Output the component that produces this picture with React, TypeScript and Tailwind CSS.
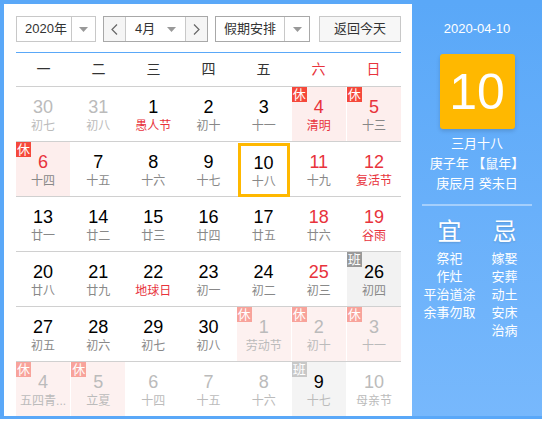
import React from "react";

type Day = {
  d: number;
  l: string;
  faded?: boolean;
  red?: boolean;
  lred?: boolean;
  tag?: "休" | "班";
  today?: boolean;
};

const weeks: Day[][] = [
  [
    { d: 30, l: "初七", faded: true },
    { d: 31, l: "初八", faded: true },
    { d: 1, l: "愚人节", lred: true },
    { d: 2, l: "初十" },
    { d: 3, l: "十一" },
    { d: 4, l: "清明", red: true, lred: true, tag: "休" },
    { d: 5, l: "十三", red: true, tag: "休" },
  ],
  [
    { d: 6, l: "十四", red: true, tag: "休" },
    { d: 7, l: "十五" },
    { d: 8, l: "十六" },
    { d: 9, l: "十七" },
    { d: 10, l: "十八", today: true },
    { d: 11, l: "十九", red: true },
    { d: 12, l: "复活节", red: true, lred: true },
  ],
  [
    { d: 13, l: "廿一" },
    { d: 14, l: "廿二" },
    { d: 15, l: "廿三" },
    { d: 16, l: "廿四" },
    { d: 17, l: "廿五" },
    { d: 18, l: "廿六", red: true },
    { d: 19, l: "谷雨", red: true, lred: true },
  ],
  [
    { d: 20, l: "廿八" },
    { d: 21, l: "廿九" },
    { d: 22, l: "地球日", lred: true },
    { d: 23, l: "初一" },
    { d: 24, l: "初二" },
    { d: 25, l: "初三", red: true },
    { d: 26, l: "初四", tag: "班" },
  ],
  [
    { d: 27, l: "初五" },
    { d: 28, l: "初六" },
    { d: 29, l: "初七" },
    { d: 30, l: "初八" },
    { d: 1, l: "劳动节", faded: true, tag: "休" },
    { d: 2, l: "初十", faded: true, tag: "休" },
    { d: 3, l: "十一", faded: true, tag: "休" },
  ],
  [
    { d: 4, l: "五四青...", faded: true, tag: "休" },
    { d: 5, l: "立夏", faded: true, tag: "休" },
    { d: 6, l: "十四", faded: true },
    { d: 7, l: "十五", faded: true },
    { d: 8, l: "十六", faded: true },
    { d: 9, l: "十七", faded: true, tag: "班" },
    { d: 10, l: "母亲节", faded: true },
  ],
];

const font = { fontFamily: '"Liberation Sans", "Noto Sans CJK SC", sans-serif' };

function Caret() {
  return (
    <svg width="9" height="5" viewBox="0 0 9 5">
      <path d="M0 0h9L4.5 5z" fill="#999" />
    </svg>
  );
}

function Chevron({ dir }: { dir: "l" | "r" }) {
  return (
    <svg width="7" height="11" viewBox="0 0 7 11">
      <polyline
        points={dir === "l" ? "6,0.5 1,5.5 6,10.5" : "1,0.5 6,5.5 1,10.5"}
        fill="none"
        stroke="#666"
        strokeWidth="1.2"
      />
    </svg>
  );
}

function Cell({ day }: { day: Day }) {
  let bg = "bg-white";
  if (day.tag === "休") bg = day.faded ? "bg-[#fdf1f0]" : "bg-[#fdeeed]";
  if (day.tag === "班") bg = day.faded ? "bg-[#f4f4f4]" : "bg-[#f2f2f2]";

  let numColor = "text-black";
  if (day.red) numColor = "text-[#e8333c]";
  if (day.faded && day.tag !== "班") numColor = "text-[#bbbbbb]";

  let lunarColor = "text-[#888888]";
  if (day.lred) lunarColor = "text-[#e8333c]";
  if (day.faded) lunarColor = "text-[#bbbbbb]";

  let badge = "";
  if (day.tag === "休") badge = day.faded ? "bg-[#f8a39b]" : "bg-[#f5483b]";
  if (day.tag === "班") badge = day.faded ? "bg-[#c8c8c8]" : "bg-[#999999]";

  return (
    <div className={`relative h-[54px] ${bg}`}>
      {day.tag && (
        <span
          className={`absolute left-0 top-0 flex h-[15px] w-[15px] items-center justify-center text-[13px] leading-none text-white ${badge}`}
        >
          {day.tag}
        </span>
      )}
      <div
        className={`flex h-full flex-col items-center ${
          day.today ? "mx-px mt-px h-[53px] border-[3px] border-[#ffb800] pt-[7px]" : "pt-[10px]"
        }`}
      >
        <span className={`text-[18px] leading-[20px] ${numColor}`}>{day.d}</span>
        <span className={`text-[12px] leading-[18px] ${lunarColor}`}>{day.l}</span>
      </div>
    </div>
  );
}

export default function App() {
  return (
    <div className="h-[421px] w-[545px] bg-white" style={font}>
      <div className="flex h-[419px] w-[542px] border-b-[3px] border-l-4 border-t-4 border-[#5aa8f8]">
        {/* calendar */}
        <div className="w-[408px] pl-3 pr-[11px] pt-3">
          <div className="flex h-[26px] text-[13px] text-[#333]">
            <div className="flex w-[80px] border border-[#c8c8c8] bg-white">
              <span className="flex flex-1 items-center justify-center pl-1">2020年</span>
              <span className="flex w-[24px] items-center justify-center border-l border-[#c8c8c8]">
                <Caret />
              </span>
            </div>
            <div className="ml-[7px] flex w-[105px] border border-[#a8a8a8] bg-white">
              <span className="flex w-[22px] items-center justify-center border-r border-[#c8c8c8] bg-[#f5f5f5]">
                <Chevron dir="l" />
              </span>
              <span className="flex flex-1 items-center pl-[9px]">
                4月
                <span className="ml-auto mr-[9px] flex">
                  <Caret />
                </span>
              </span>
              <span className="flex w-[22px] items-center justify-center border-l border-[#c8c8c8] bg-[#f5f5f5]">
                <Chevron dir="r" />
              </span>
            </div>
            <div className="ml-[7px] flex w-[95px] border border-[#a8a8a8] bg-white">
              <span className="flex flex-1 items-center justify-center">假期安排</span>
              <span className="flex w-[25px] items-center justify-center border-l border-[#c8c8c8]">
                <Caret />
              </span>
            </div>
            <div className="ml-[9px] flex w-[82px] items-center justify-center border border-[#c8c8c8] bg-[#f7f7f7]">
              返回今天
            </div>
          </div>

          <div className="mt-[10px] border-t border-[#5aa8f8]">
            <div className="grid h-[34px] grid-cols-7 items-center border-b border-[#d0d0d0] text-center text-[14px]">
              <span className="text-[#333]">一</span>
              <span className="text-[#333]">二</span>
              <span className="text-[#333]">三</span>
              <span className="text-[#333]">四</span>
              <span className="text-[#333]">五</span>
              <span className="text-[#e8333c]">六</span>
              <span className="text-[#e8333c]">日</span>
            </div>
            {weeks.map((w, i) => (
              <div
                key={i}
                className={`grid grid-cols-7 gap-x-px ${i < 5 ? "border-b border-[#d0d0d0]" : ""}`}
              >
                {w.map((d, j) => (
                  <Cell key={j} day={d} />
                ))}
              </div>
            ))}
          </div>
        </div>

        {/* side panel */}
        <div className="flex flex-1 flex-col items-center bg-gradient-to-b from-[#5aa8f8] to-[#77b8fc] px-[10px] pt-4 text-white">
          <div className="text-[13px] leading-[18px]">2020-04-10</div>
          <div className="mt-4 flex h-[75px] w-[75px] items-center justify-center rounded-[3px] bg-[#ffb800] text-[50px] leading-none shadow-[0_2px_4px_rgba(0,0,0,0.15)]">
            10
          </div>
          <div className="mt-[5px] text-[13px] leading-[20px]">三月十八</div>
          <div className="text-[13px] leading-[20px]">庚子年 【鼠年】</div>
          <div className="text-[13px] leading-[20px]">庚辰月 癸未日</div>
          <div className="mt-[10px] h-[2px] w-full bg-white/40" />
          <div className="mt-[11px] grid w-full grid-cols-2 text-center">
            <div className="flex flex-col items-center">
              <span className="text-[24px] leading-[30px] [text-shadow:0_1px_2px_rgba(0,0,0,0.15)]">宜</span>
              <span className="mt-[3px] text-[13px] leading-[18px]">祭祀</span>
              <span className="text-[13px] leading-[18px]">作灶</span>
              <span className="whitespace-nowrap text-[13px] leading-[18px]">平治道涂</span>
              <span className="whitespace-nowrap text-[13px] leading-[18px]">余事勿取</span>
            </div>
            <div className="flex flex-col items-center">
              <span className="text-[24px] leading-[30px] [text-shadow:0_1px_2px_rgba(0,0,0,0.15)]">忌</span>
              <span className="mt-[3px] text-[13px] leading-[18px]">嫁娶</span>
              <span className="text-[13px] leading-[18px]">安葬</span>
              <span className="text-[13px] leading-[18px]">动土</span>
              <span className="text-[13px] leading-[18px]">安床</span>
              <span className="text-[13px] leading-[18px]">治病</span>
            </div>
          </div>
        </div>
      </div>
    </div>
  );
}
